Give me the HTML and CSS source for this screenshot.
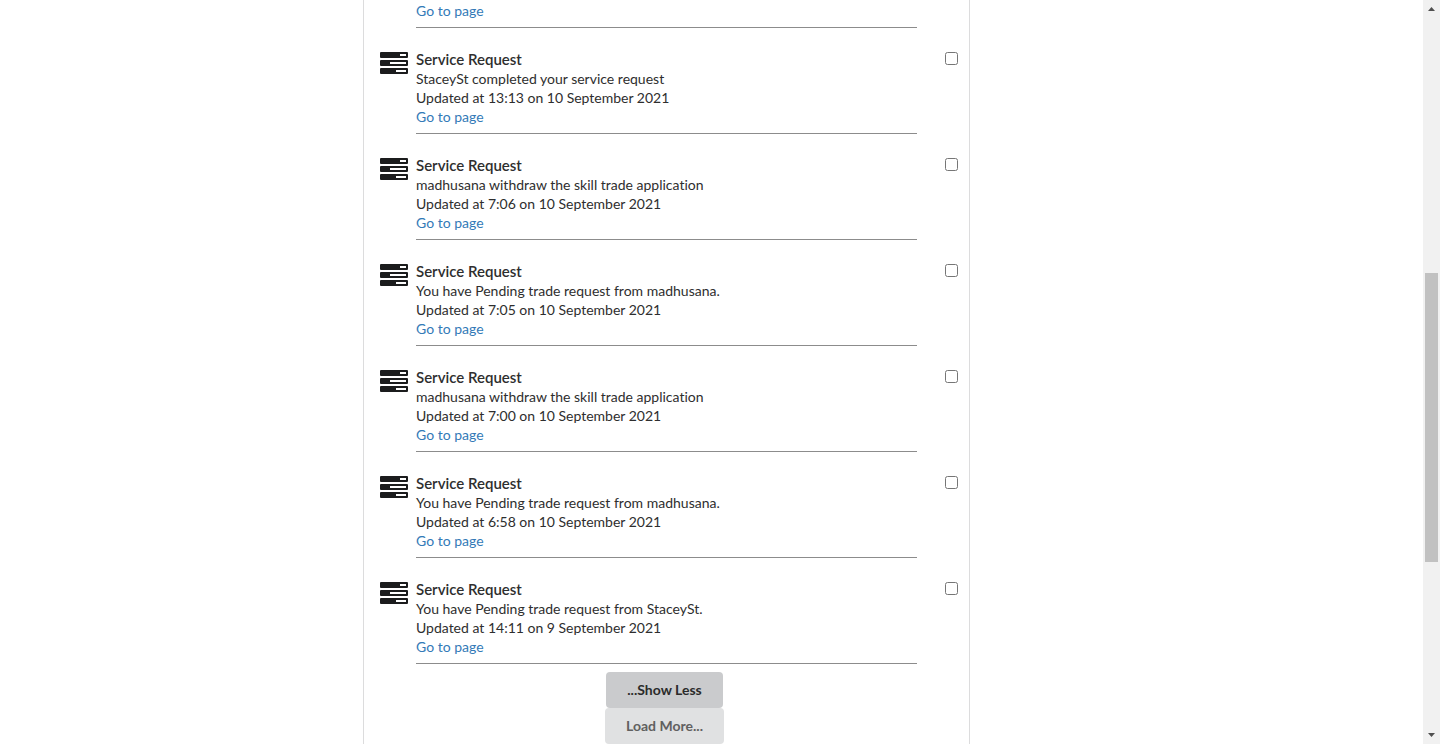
FILE: index.html
```
<!DOCTYPE html>
<html lang="en">
<head>
<meta charset="utf-8">
<title>Notifications</title>
<link rel="stylesheet" href="styles.css">
</head>
<body>
<svg class="sprite" aria-hidden="true">
  <symbol id="tasks" viewBox="0 0 28 22">
    <path fill-rule="evenodd" d="M1 0H27Q28 0 28 1V5Q28 6 27 6H1Q0 6 0 5V1Q0 0 1 0ZM20 2V4H26V2ZM1 8H27Q28 8 28 9V13Q28 14 27 14H1Q0 14 0 13V9Q0 8 1 8ZM10 10V12H26V10ZM1 16H27Q28 16 28 17V21Q28 22 27 22H1Q0 22 0 21V17Q0 16 1 16ZM16 18V20H26V18Z"/>
  </symbol>
</svg>
<div class="window">
  <main class="page">
    <section class="panel">
      <article class="item item-clipped">
        <div class="body"><a class="link" href="#">Go to page</a><hr class="rule"></div>
      </article>
      <article class="item">
        <svg class="icon" aria-hidden="true"><use href="#tasks"/></svg>
        <div class="body">
          <h2 class="title">Service Request</h2>
          <p class="text">StaceySt completed your service request</p>
          <p class="text">Updated at 13:13 on 10 September 2021</p>
          <a class="link" href="#">Go to page</a>
          <hr class="rule">
        </div>
        <input class="check" type="checkbox" aria-label="Select notification from 13:13">
      </article>
      <article class="item">
        <svg class="icon" aria-hidden="true"><use href="#tasks"/></svg>
        <div class="body">
          <h2 class="title">Service Request</h2>
          <p class="text">madhusana withdraw the skill trade application</p>
          <p class="text">Updated at 7:06 on 10 September 2021</p>
          <a class="link" href="#">Go to page</a>
          <hr class="rule">
        </div>
        <input class="check" type="checkbox" aria-label="Select notification from 7:06">
      </article>
      <article class="item">
        <svg class="icon" aria-hidden="true"><use href="#tasks"/></svg>
        <div class="body">
          <h2 class="title">Service Request</h2>
          <p class="text">You have Pending trade request from madhusana.</p>
          <p class="text">Updated at 7:05 on 10 September 2021</p>
          <a class="link" href="#">Go to page</a>
          <hr class="rule">
        </div>
        <input class="check" type="checkbox" aria-label="Select notification from 7:05">
      </article>
      <article class="item">
        <svg class="icon" aria-hidden="true"><use href="#tasks"/></svg>
        <div class="body">
          <h2 class="title">Service Request</h2>
          <p class="text">madhusana withdraw the skill trade application</p>
          <p class="text">Updated at 7:00 on 10 September 2021</p>
          <a class="link" href="#">Go to page</a>
          <hr class="rule">
        </div>
        <input class="check" type="checkbox" aria-label="Select notification from 7:00">
      </article>
      <article class="item">
        <svg class="icon" aria-hidden="true"><use href="#tasks"/></svg>
        <div class="body">
          <h2 class="title">Service Request</h2>
          <p class="text">You have Pending trade request from madhusana.</p>
          <p class="text">Updated at 6:58 on 10 September 2021</p>
          <a class="link" href="#">Go to page</a>
          <hr class="rule">
        </div>
        <input class="check" type="checkbox" aria-label="Select notification from 6:58">
      </article>
      <article class="item">
        <svg class="icon" aria-hidden="true"><use href="#tasks"/></svg>
        <div class="body">
          <h2 class="title">Service Request</h2>
          <p class="text">You have Pending trade request from StaceySt.</p>
          <p class="text">Updated at 14:11 on 9 September 2021</p>
          <a class="link" href="#">Go to page</a>
          <hr class="rule">
        </div>
        <input class="check" type="checkbox" aria-label="Select notification from 14:11">
      </article>
      <div class="actions">
        <button class="button button-active" type="button">...Show Less</button>
        <button class="button" type="button">Load More...</button>
      </div>
    </section>
  </main>
  <div class="scrollbar" aria-hidden="true">
    <svg class="arrow" viewBox="0 0 17 17"><path d="M5 11L8.500 7L12 11Z"/></svg>
    <div class="track"><div class="thumb"></div></div>
    <svg class="arrow" viewBox="0 0 17 17"><path d="M5 6L8.500 10L12 6Z"/></svg>
  </div>
</div>
</body>
</html>
```
FILE: styles.css
```
* { box-sizing: border-box; }

body {
  margin: 0;
  background: #fff;
  color: #2e2e2e;
  font-family: Lato, "Liberation Sans", sans-serif;
  font-size: 14px;
  line-height: 19px;
  font-variant-ligatures: none;
}

.sprite { display: none; }

.window {
  display: grid;
  grid-template-columns: 1fr 17px;
  height: 100vh;
  overflow: hidden;
}

.page {
  display: grid;
  grid-template-columns: 363fr 607fr 453fr;
  min-height: 0;
}

.panel {
  grid-column: 2;
  padding: 1px 11px 0 16px;
  border: solid #dcdcdd;
  border-width: 0 1px;
}

.item {
  display: grid;
  grid-template-columns: 28px 1fr 13px;
  column-gap: 8px;
  padding-bottom: 21px;
}

.item:last-of-type { padding-bottom: 8px; }

.body {
  grid-column: 2;
  margin-right: 20px;
}

.icon {
  width: 28px;
  height: 22px;
  margin-top: 3px;
  fill: #1b1c1d;
}

.title {
  margin: 0;
  font-size: 15px;
  line-height: 20px;
  font-weight: 600;
}

.text { margin: 0; }

.link {
  display: block;
  color: #337ab7;
  text-decoration: none;
}

.rule {
  margin: 7px 0 0;
  border: 0;
  border-top: 1px solid #8c8c8c;
}

.check {
  width: 13px;
  height: 13px;
  margin: 3px 0 0;
}

.actions {
  display: flex;
  flex-direction: column;
  align-items: center;
  padding-right: 9px;
}

.button {
  height: 36px;
  padding: 0 21px;
  border: 0;
  border-radius: 4px;
  background: #e0e1e2;
  color: #606060;
  font: 700 14px/14px Lato, "Liberation Sans", sans-serif;
}

.button-active {
  background: #cacbcd;
  color: #2b2b2b;
}

.scrollbar {
  display: grid;
  grid-template-rows: 17px 1fr 17px;
  background: #f1f1f1;
}

.arrow {
  width: 17px;
  height: 17px;
  fill: #505050;
}

.track {
  display: grid;
  grid-template-rows: 256fr 289fr 165fr;
  padding: 0 2px;
}

.thumb {
  grid-row: 2;
  background: #c1c1c1;
}
```
